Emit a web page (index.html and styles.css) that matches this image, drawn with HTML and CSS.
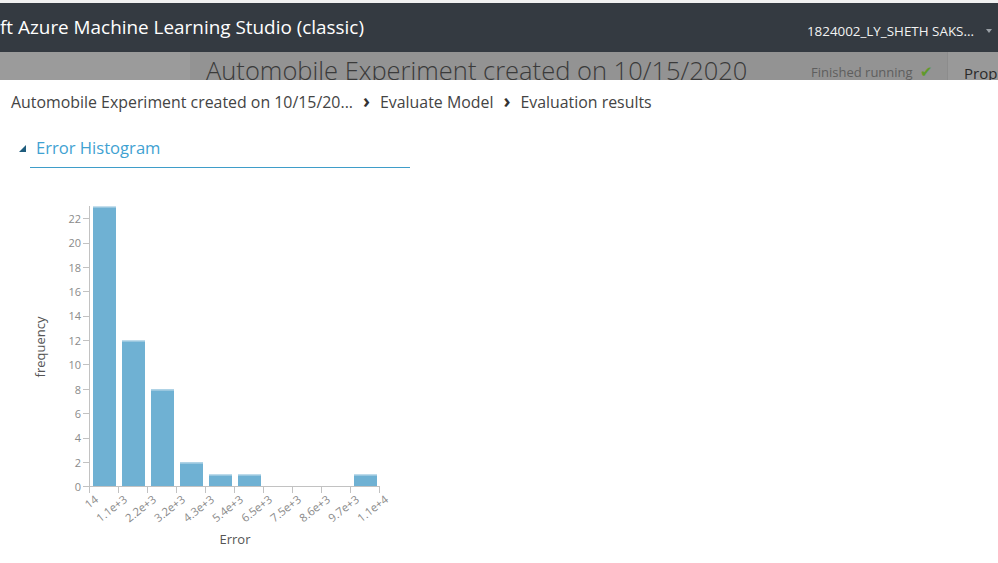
FILE: index.html
```html
<!DOCTYPE html>
<html>
<head>
<meta charset="utf-8">
<link rel="stylesheet" href="styles.css">
</head>
<body>
<div class="topstrip"></div>
<header class="header">
  <div class="app-title">ft Azure Machine Learning Studio (classic)</div>
  <div class="user">
    <span class="user-name">1824002_LY_SHETH SAKS...</span>
    <span class="caret"></span>
  </div>
</header>
<div class="band">
  <div class="band-left"></div>
  <div class="band-main">
    <div class="exp-title">Automobile Experiment created on 10/15/2020</div>
    <div class="status">Finished running <span class="check">✔</span></div>
  </div>
  <div class="band-right"><span class="prop">Prop</span></div>
</div>
<main class="modal">
  <nav class="crumbs">
    <span>Automobile Experiment created on 10/15/20...</span>
    <span class="chev">›</span>
    <span>Evaluate Model</span>
    <span class="chev">›</span>
    <span>Evaluation results</span>
  </nav>
  <section class="section">
    <div class="section-head">
      <span class="tri"></span>
      <span class="section-title">Error Histogram</span>
    </div>
    <svg class="chart" width="420" height="383" viewBox="0 0 420 383">
      <g class="bars">
        <rect x="93" y="26.6" width="23" height="280.1"/>
        <rect x="122" y="160.5" width="23" height="146.2"/>
        <rect x="151" y="209.3" width="23" height="97.4"/>
        <rect x="180" y="282.3" width="23" height="24.4"/>
        <rect x="209" y="294.5" width="23" height="12.2"/>
        <rect x="238" y="294.5" width="23" height="12.2"/>
        <rect x="354" y="294.5" width="23" height="12.2"/>
      </g>
      <g class="bartops">
        <line x1="93" x2="116" y1="27" y2="27"/>
        <line x1="122" x2="145" y1="161" y2="161"/>
        <line x1="151" x2="174" y1="210" y2="210"/>
        <line x1="180" x2="203" y1="283" y2="283"/>
        <line x1="209" x2="232" y1="295" y2="295"/>
        <line x1="238" x2="261" y1="295" y2="295"/>
        <line x1="354" x2="377" y1="295" y2="295"/>
      </g>
      <g class="axis">
        <line x1="89.5" x2="89.5" y1="26" y2="307"/>
        <line x1="89" x2="380" y1="306.5" y2="306.5"/>
        <line x1="83" x2="89" y1="306.5" y2="306.5"/>
        <line x1="83" x2="89" y1="282.5" y2="282.5"/>
        <line x1="83" x2="89" y1="258.5" y2="258.5"/>
        <line x1="83" x2="89" y1="233.5" y2="233.5"/>
        <line x1="83" x2="89" y1="209.5" y2="209.5"/>
        <line x1="83" x2="89" y1="184.5" y2="184.5"/>
        <line x1="83" x2="89" y1="160.5" y2="160.5"/>
        <line x1="83" x2="89" y1="136.5" y2="136.5"/>
        <line x1="83" x2="89" y1="111.5" y2="111.5"/>
        <line x1="83" x2="89" y1="87.5" y2="87.5"/>
        <line x1="83" x2="89" y1="63.5" y2="63.5"/>
        <line x1="83" x2="89" y1="38.5" y2="38.5"/>
        <line x1="89.5" x2="89.5" y1="306" y2="313"/>
        <line x1="118.5" x2="118.5" y1="306" y2="313"/>
        <line x1="147.5" x2="147.5" y1="306" y2="313"/>
        <line x1="176.5" x2="176.5" y1="306" y2="313"/>
        <line x1="205.5" x2="205.5" y1="306" y2="313"/>
        <line x1="234.5" x2="234.5" y1="306" y2="313"/>
        <line x1="263.5" x2="263.5" y1="306" y2="313"/>
        <line x1="292.5" x2="292.5" y1="306" y2="313"/>
        <line x1="321.5" x2="321.5" y1="306" y2="313"/>
        <line x1="350.5" x2="350.5" y1="306" y2="313"/>
        <line x1="379.5" x2="379.5" y1="306" y2="313"/>
      </g>
      <g class="ylabels">
        <text x="81" y="310.5">0</text>
        <text x="81" y="286.5">2</text>
        <text x="81" y="262">4</text>
        <text x="81" y="237.5">6</text>
        <text x="81" y="213.5">8</text>
        <text x="81" y="189">10</text>
        <text x="81" y="164.5">12</text>
        <text x="81" y="140">14</text>
        <text x="81" y="116">16</text>
        <text x="81" y="91.5">18</text>
        <text x="81" y="67">20</text>
        <text x="81" y="42.5">22</text>
      </g>
      <g class="xlabels">
        <text transform="translate(99 321) rotate(-38)">14</text>
        <text transform="translate(128 321) rotate(-38)">1.1e+3</text>
        <text transform="translate(157 321) rotate(-38)">2.2e+3</text>
        <text transform="translate(186 321) rotate(-38)">3.2e+3</text>
        <text transform="translate(215 321) rotate(-38)">4.3e+3</text>
        <text transform="translate(244 321) rotate(-38)">5.4e+3</text>
        <text transform="translate(273 321) rotate(-38)">6.5e+3</text>
        <text transform="translate(302 321) rotate(-38)">7.5e+3</text>
        <text transform="translate(331 321) rotate(-38)">8.6e+3</text>
        <text transform="translate(360 321) rotate(-38)">9.7e+3</text>
        <text transform="translate(389 321) rotate(-38)">1.1e+4</text>
      </g>
      <text class="axis-title" transform="translate(45 167) rotate(-90)">frequency</text>
      <text class="axis-title" x="235" y="364">Error</text>
    </svg>
  </section>
</main>
</body>
</html>
```

FILE: styles.css
```css
* { box-sizing: border-box; }
html, body { margin: 0; padding: 0; }
body {
  width: 998px;
  height: 563px;
  overflow: hidden;
  font-family: "Open Sans", "Noto Sans", "Liberation Sans", sans-serif;
  background: #fff;
}
.topstrip {
  height: 3px;
  background: #f0f0f0;
}
.header {
  height: 49px;
  background: #343a41;
  display: flex;
  align-items: center;
  justify-content: space-between;
  color: #fff;
}
.app-title {
  font-size: 18.9px;
  padding-bottom: 2px;
  white-space: nowrap;
}
.user {
  display: flex;
  align-items: center;
  gap: 12px;
  padding-right: 6px;
  padding-top: 6px;
}
.user-name {
  font-size: 13.4px;
  color: #f2f2f2;
}
.caret {
  width: 0;
  height: 0;
  border-left: 3.5px solid transparent;
  border-right: 3.5px solid transparent;
  border-top: 4px solid #9aa0a6;
}
.band {
  height: 28px;
  display: flex;
  overflow: hidden;
}
.band-left {
  width: 190px;
  background: #9b9b9b;
}
.band-main {
  flex: 1;
  background: #939393;
  display: flex;
  justify-content: space-between;
  overflow: hidden;
  padding-left: 16px;
  padding-right: 14px;
}
.exp-title {
  font-size: 25.5px;
  color: #3a3a3a;
  line-height: 36px;
  white-space: nowrap;
  font-weight: 300;
}
.status {
  font-size: 13px;
  color: #5e5e5e;
  padding-top: 10px;
  line-height: 18px;
  white-space: nowrap;
}
.check {
  color: #5f9a2b;
  font-size: 15px;
  margin-left: 4px;
}
.band-right {
  width: 51px;
  background: #999;
  border-left: 1px solid #8c8c8c;
  padding-left: 16px;
  padding-top: 10px;
  overflow: hidden;
}
.prop {
  font-size: 15px;
  color: #2a2a2a;
  white-space: nowrap;
}
.modal {
  background: #fff;
  padding-top: 11px;
}
.crumbs {
  display: flex;
  align-items: center;
  gap: 10px;
  padding-left: 11px;
  font-size: 15.9px;
  color: #444;
  line-height: 22px;
}
.chev {
  font-weight: 700;
  font-size: 19px;
  color: #333;
  line-height: 22px;
  margin-top: -2px;
}
.section {
  padding-top: 26px;
}
.section-head {
  display: flex;
  align-items: center;
  margin-left: 30px;
  width: 380px;
  height: 29px;
  padding-bottom: 10px;
  border-bottom: 1px solid #3f9dc9;
  position: relative;
}
.tri {
  position: absolute;
  left: -11px;
  top: 6px;
  width: 0;
  height: 0;
  border-left: 7px solid transparent;
  border-bottom: 7px solid #1f5c7d;
}
.section-title {
  margin-left: 6px;
  font-size: 16.6px;
  line-height: 18px;
  color: #3fa2d2;
}
.chart {
  display: block;
  margin-top: 12px;
}
.bars rect { fill: #6fb1d3; }
.bartops line { stroke: #c4deec; stroke-width: 1; }
.axis line { stroke: #c2c2c2; stroke-width: 1; }
.ylabels text {
  font-size: 11px;
  fill: #8a8a8a;
  text-anchor: end;
}
.xlabels text {
  font-size: 11.3px;
  fill: #8a8a8a;
  text-anchor: end;
}
.axis-title {
  font-size: 13px;
  fill: #555;
  text-anchor: middle;
}
```
